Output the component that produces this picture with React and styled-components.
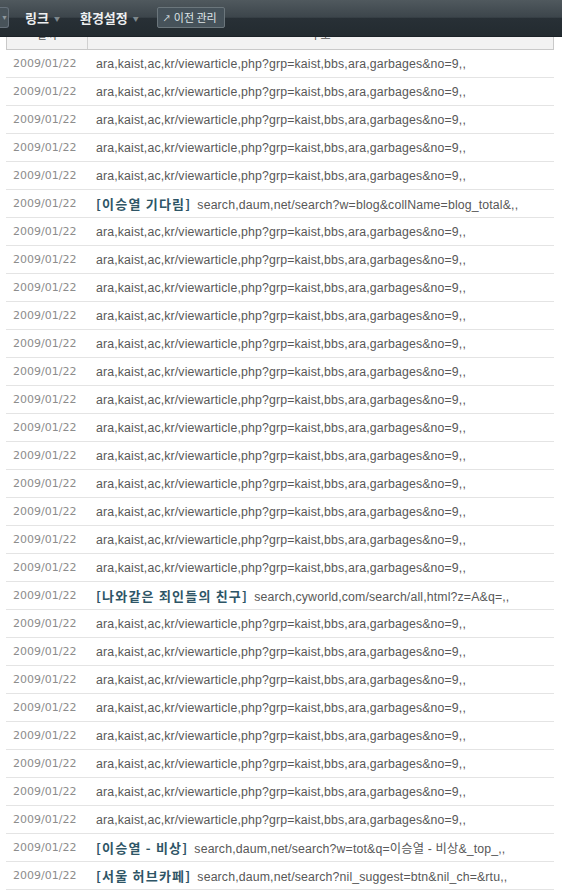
import React from 'react';
import styled, { createGlobalStyle } from 'styled-components';

const GlobalStyle = createGlobalStyle`
  body {
    margin: 0;
    background: #fff;
    font-family: "Liberation Sans", "Noto Sans CJK KR", sans-serif;
  }
`;

const NavBar = styled.div`
  position: fixed;
  top: 0;
  left: 0;
  right: 0;
  height: 37px;
  z-index: 10;
  display: flex;
  align-items: center;
  padding-bottom: 2px;
  background: linear-gradient(to bottom, #50595e 0%, #3c454b 48%, #283036 50%, #232b30 100%);
  border-bottom: 1px solid #1b2227;
  box-sizing: border-box;
`;

const StubButton = styled.div`
  width: 9px;
  height: 21px;
  border: 1px solid #66707a;
  border-left: none;
  background: #48535a;
  border-radius: 0 3px 3px 0;
  color: #8f989d;
  font-size: 7px;
  display: flex;
  align-items: center;
  padding-left: 1px;
  box-sizing: border-box;
`;

const NavItem = styled.div`
  display: flex;
  align-items: center;
  margin-left: ${p => p.$gap}px;
  color: #eef0f1;
  font-family: "Noto Sans CJK KR", sans-serif;
  font-weight: 700;
  font-size: 13px;
  letter-spacing: 0;
`;

const Caret = styled.span`
  margin-left: 5px;
  margin-top: 2px;
  color: #7d878c;
  font-size: 6px;
`;

const OldButton = styled.div`
  margin-left: 18px;
  height: 21px;
  padding: 0 7px 0 5px;
  display: flex;
  align-items: center;
  gap: 3px;
  background: #46525a;
  border: 1px solid #6b767c;
  border-radius: 2px;
  color: #dfe5e8;
  font-family: "Noto Sans CJK KR", sans-serif;
  font-size: 11px;
  box-sizing: border-box;
`;

const Arrow = styled.span`
  font-size: 8px;
  color: #e8eef0;
`;

const Page = styled.div`
  padding-top: 24px;
`;

const Table = styled.div`
  margin: 0 8px 0 6px;
`;

const HeadRow = styled.div`
  display: flex;
  height: 26px;
  background: #f2f2f2;
  border: 1px solid #c9c9c9;
  box-sizing: border-box;
  color: #555;
  font-family: "Noto Sans CJK KR", sans-serif;
  font-size: 11px;
`;

const HeadCell = styled.div`
  width: ${p => p.$w || 'auto'};
  flex: ${p => (p.$w ? 'none' : 1)};
  border-right: ${p => (p.$w ? '1px solid #d0d0d0' : 'none')};
  display: flex;
  justify-content: center;
  padding-top: 1px;
`;

const Row = styled.div`
  display: flex;
  align-items: center;
  height: 28px;
  border-bottom: 1px solid #e4e4e4;
  box-sizing: border-box;
  white-space: nowrap;
`;

const DateCell = styled.div`
  width: 90px;
  flex: none;
  padding-left: 7px;
  box-sizing: border-box;
  color: #8c8c8c;
  font-family: "DejaVu Sans", sans-serif;
  font-size: 11px;
`;

const UrlCell = styled.div`
  color: #585858;
  font-size: 12.3px;
  letter-spacing: 0.15px;
  font-family: "Liberation Sans", "Noto Sans CJK KR", sans-serif;
`;

const Title = styled.span`
  color: #2e5566;
  font-weight: 700;
  font-family: "Noto Sans CJK KR", sans-serif;
  font-size: 13px;
  margin-right: 6px;
  letter-spacing: 1.2px;
`;

const kaist = 'ara,kaist,ac,kr/viewarticle,php?grp=kaist,bbs,ara,garbages&no=9,,';

const rows = [
  ...Array(5).fill({ url: kaist }),
  { title: '[이승열 기다림]', url: 'search,daum,net/search?w=blog&collName=blog_total&,,' },
  ...Array(13).fill({ url: kaist }),
  { title: '[나와같은 죄인들의 친구]', url: 'search,cyworld,com/search/all,html?z=A&q=,,' },
  ...Array(8).fill({ url: kaist }),
  { title: '[이승열 - 비상]', url: 'search,daum,net/search?w=tot&q=이승열 - 비상&_top_,,' },
  { title: '[서울 허브카페]', url: 'search,daum,net/search?nil_suggest=btn&nil_ch=&rtu,,' },
];

const App = () => (
  <>
    <GlobalStyle />
    <NavBar>
      <StubButton>▼</StubButton>
      <NavItem $gap={16}>링크<Caret>▼</Caret></NavItem>
      <NavItem $gap={20}>환경설정<Caret>▼</Caret></NavItem>
      <OldButton><Arrow>↗</Arrow>이전 관리</OldButton>
    </NavBar>
    <Page>
      <Table>
        <HeadRow>
          <HeadCell $w="80px">날짜</HeadCell>
          <HeadCell>주소</HeadCell>
        </HeadRow>
        {rows.map((r, i) => (
          <Row key={i}>
            <DateCell>2009/01/22</DateCell>
            <UrlCell>
              {r.title && <Title>{r.title}</Title>}
              {r.url}
            </UrlCell>
          </Row>
        ))}
      </Table>
    </Page>
  </>
);

export default App;
